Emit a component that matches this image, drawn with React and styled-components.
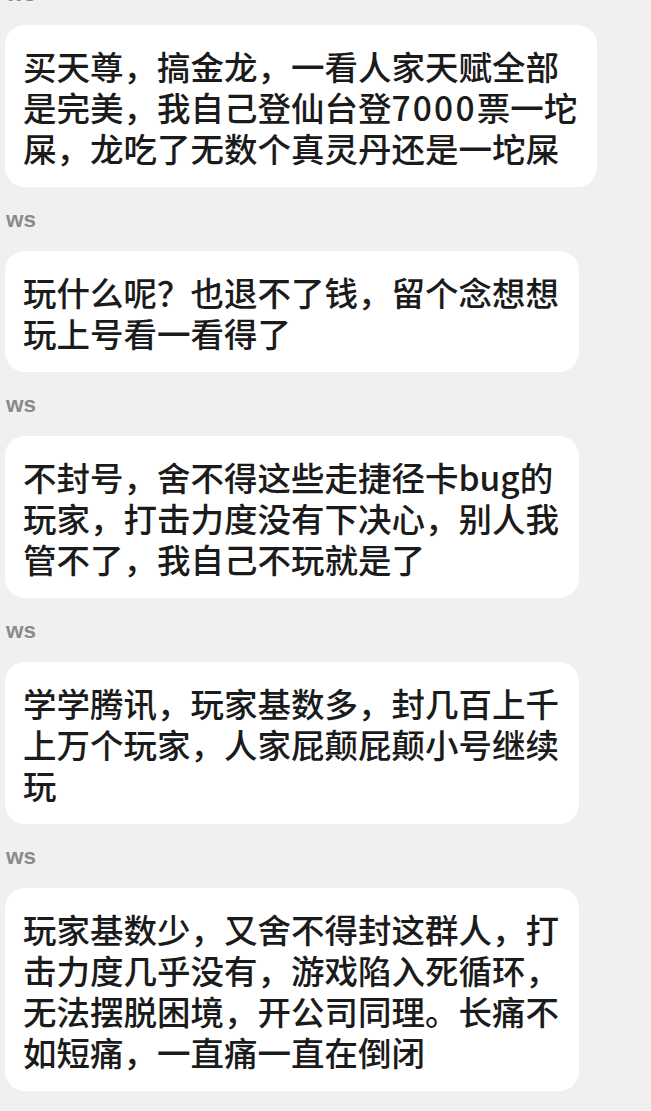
import React from "react";
import styled, { createGlobalStyle } from "styled-components";

const GlobalStyle = createGlobalStyle`
  html, body {
    margin: 0;
    padding: 0;
    background: #f0f0f0;
  }
  body {
    font-family: "Noto Sans CJK SC", "Noto Sans", sans-serif;
  }
`;

const Feed = styled.div`
  display: flex;
  flex-direction: column;
  align-items: flex-start;
  padding: 0 5px;
  margin-top: -18px;
  min-height: 1130px;
  box-sizing: border-box;
`;

const Sender = styled.div`
  font-family: "Liberation Sans", Arial, sans-serif;
  font-weight: 700;
  font-size: 22.5px;
  line-height: 24px;
  color: #8a8a8c;
  padding-left: 1px;
  margin: ${(p) => (p.$first ? "0" : "21px")} 0 19px;
`;

const Bubble = styled.div`
  box-sizing: border-box;
  max-width: 593px;
  background: #ffffff;
  border-radius: 20px;
  padding: 19.5px 20px 19.5px 18px;
  font-family: "Noto Sans CJK SC", "Noto Sans", sans-serif;
  font-weight: 500;
  font-size: 33.5px;
  line-height: 41px;
  color: #1b1b1b;
`;

const Line = styled.span`
  display: block;
  white-space: nowrap;
`;

const Digits = styled.span`
  letter-spacing: 2.2px;
`;

const messages = [
  [
    "买天尊，搞金龙，一看人家天赋全部",
    <>
      是完美，我自己登仙台登<Digits>7000</Digits>票一坨
    </>,
    "屎，龙吃了无数个真灵丹还是一坨屎",
  ],
  ["玩什么呢？也退不了钱，留个念想想", "玩上号看一看得了"],
  [
    "不封号，舍不得这些走捷径卡bug的",
    "玩家，打击力度没有下决心，别人我",
    "管不了，我自己不玩就是了",
  ],
  [
    "学学腾讯，玩家基数多，封几百上千",
    "上万个玩家，人家屁颠屁颠小号继续",
    "玩",
  ],
  [
    "玩家基数少，又舍不得封这群人，打",
    "击力度几乎没有，游戏陷入死循环，",
    "无法摆脱困境，开公司同理。长痛不",
    "如短痛，一直痛一直在倒闭",
  ],
];

export default function App() {
  return (
    <>
      <GlobalStyle />
      <Feed lang="zh-CN">
        {messages.map((lines, i) => (
          <React.Fragment key={i}>
            <Sender $first={i === 0}>ws</Sender>
            <Bubble>
              {lines.map((l, j) => (
                <Line key={j}>{l}</Line>
              ))}
            </Bubble>
          </React.Fragment>
        ))}
      </Feed>
    </>
  );
}
